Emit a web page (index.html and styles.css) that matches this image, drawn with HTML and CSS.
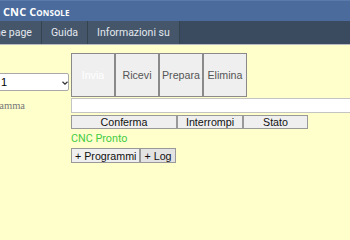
FILE: index.html
```html
<!DOCTYPE html>
<html lang="it">
<head>
<meta charset="utf-8">
<title>CNC Console</title>
<link rel="stylesheet" href="styles.css">
</head>
<body>
<header class="top">
  <div class="titlebar"><span class="title">CNC Console</span></div>
  <nav class="nav">
    <a class="nav-item nav-home">Home page</a>
    <a class="nav-item">Guida</a>
    <a class="nav-item">Informazioni su</a>
  </nav>
</header>
<main class="panel">
  <div class="sel-cell">
    <select class="prog-select"><option>1</option></select>
    <svg class="sel-arrow" width="6" height="4" viewBox="0 0 6 4" aria-hidden="true"><path d="M0.5 0.8 L3 3.2 L5.5 0.8" fill="none" stroke="#333" stroke-width="1.2"/></svg>
  </div>
  <div class="btn-group">
    <button class="act act-off">Invia</button><button class="act">Ricevi</button><button class="act">Prepara</button><button class="act">Elimina</button>
  </div>
  <label class="prog-label">Programma</label>
  <input class="prog-input" type="text">
  <div class="cmd-row">
    <button class="cmd cmd-wide">Conferma</button><button class="cmd">Interrompi</button><button class="cmd">Stato</button>
  </div>
  <p class="status">CNC Pronto</p>
  <div class="toggles">
    <button class="tog">+ Programmi</button><button class="tog tog-active">+ Log</button>
  </div>
</main>
</body>
</html>
```
FILE: styles.css
```css
html, body {
  margin: 0;
  padding: 0;
  overflow: hidden;
}
body {
  background: #ffffcc;
  width: 350px;
  height: 240px;
  font-family: "Liberation Sans", Arial, sans-serif;
}
.top {
  border-bottom: 1px solid #b9bcc0;
}
.titlebar {
  height: 21px;
  background: #4a6b9c;
  border-top: 1px solid #5a7aaa;
  box-sizing: border-box;
  display: flex;
  align-items: center;
  padding-left: 3px;
}
.title {
  color: #ffffff;
  font-family: "Open Sans", sans-serif;
  font-weight: 700;
  font-variant: small-caps;
  font-size: 11px;
  letter-spacing: 0.1px;
}
.nav {
  height: 23px;
  background: #3b4b5f;
  display: flex;
}
.nav-item {
  display: flex;
  align-items: center;
  padding: 0 9px;
  background: #45566b;
  border-right: 1px solid #35434f;
  color: #e4e8ee;
  font-family: "Roboto", sans-serif;
  font-size: 10.5px;
  white-space: nowrap;
}
.nav-home {
  margin-left: -31px;
}
.panel {
  display: grid;
  grid-template-columns: 69px 1fr;
  column-gap: 2px;
  padding-top: 8px;
}
.sel-cell {
  align-self: end;
  padding-bottom: 6px;
  position: relative;
}
.prog-select {
  display: block;
  margin-left: -6px;
  width: 75px;
  height: 18px;
  -webkit-appearance: none;
  appearance: none;
  font-family: "Liberation Sans", Arial, sans-serif;
  font-size: 11px;
  background: #ffffff;
  border: 1px solid #a9a9a9;
  border-radius: 2px;
  color: #000;
  padding: 0 0 0 6px;
}
.sel-arrow {
  position: absolute;
  left: 62px;
  top: 8px;
  pointer-events: none;
}
.btn-group {
  display: flex;
}
.act {
  width: 44px;
  height: 44px;
  margin: 0;
  padding: 0;
  background: #efefef;
  border: 1px solid #8a8a8a;
  color: #555555;
  font-family: "Liberation Sans", Arial, sans-serif;
  font-size: 10.7px;
}
.act-off {
  color: #ffffff;
}
.prog-label {
  align-self: center;
  margin-left: -24px;
  white-space: nowrap;
  font-family: "Liberation Serif", "Times New Roman", serif;
  font-size: 10.5px;
  color: #777777;
}
.prog-input {
  margin-top: 1px;
  width: 300px;
  height: 15px;
  box-sizing: border-box;
  border: 1px solid #c4c4c4;
  background: #ffffff;
  padding: 0;
}
.cmd-row {
  grid-column: 2;
  display: flex;
  margin-top: 2px;
}
.cmd {
  width: 66px;
  height: 14px;
  margin: 0;
  padding: 0;
  background: #efefef;
  border: 1px solid #999999;
  color: #111111;
  font-family: "Liberation Sans", Arial, sans-serif;
  font-size: 10.7px;
  line-height: 12px;
}
.cmd-wide {
  width: 106px;
}
.cmd:last-child {
  width: 65px;
}
.status {
  grid-column: 2;
  margin: 2px 0 0;
  height: 15px;
  line-height: 15px;
  color: #44cc44;
  font-family: "Roboto", sans-serif;
  font-size: 10.8px;
}
.toggles {
  grid-column: 2;
  display: flex;
  margin-top: 2px;
}
.tog {
  height: 15px;
  margin: 0;
  padding: 0 3px;
  background: #efefef;
  border: 1px solid #999999;
  color: #111111;
  font-family: "Liberation Sans", Arial, sans-serif;
  font-size: 10.7px;
  line-height: 12px;
}
.tog-active {
  background: #e3e3e3;
}
```
